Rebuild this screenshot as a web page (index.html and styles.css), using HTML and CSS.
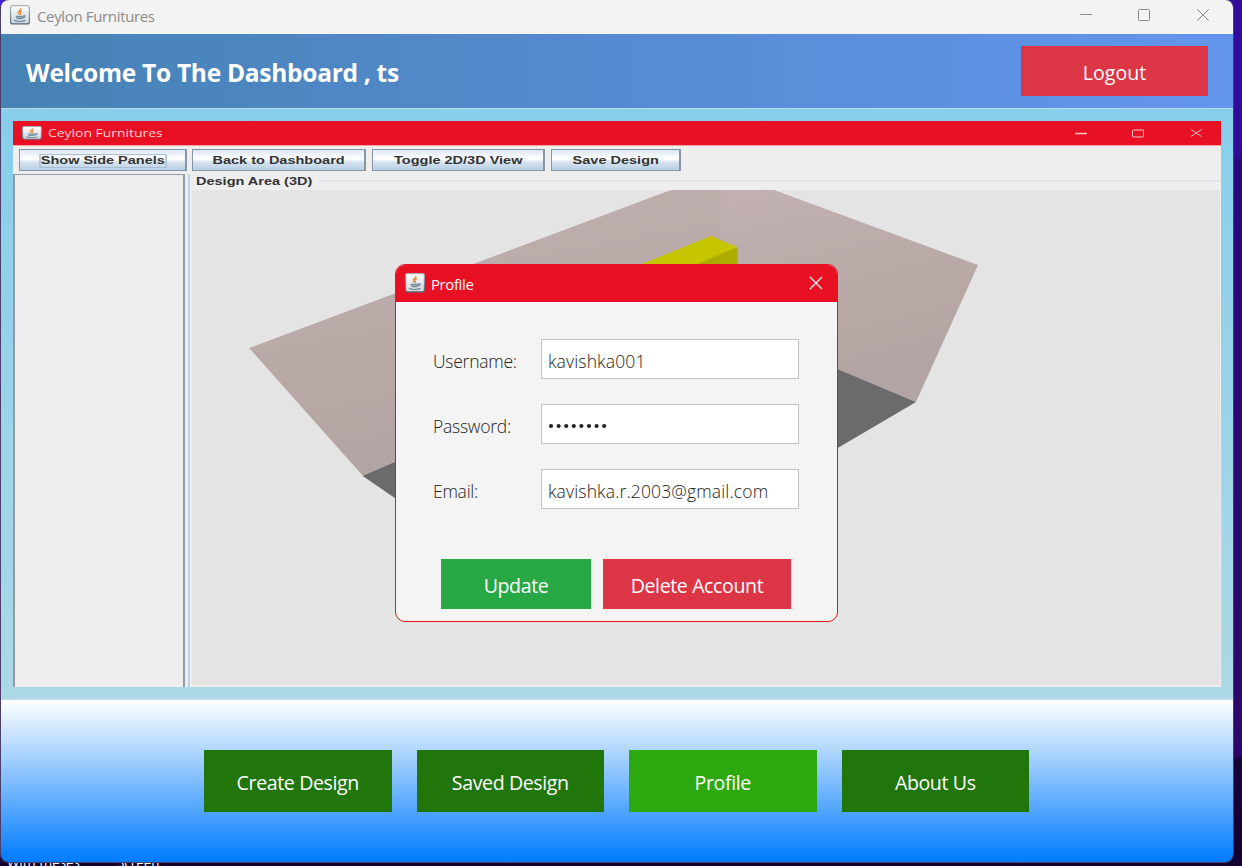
FILE: index.html
```html
<!DOCTYPE html>
<html lang="en">
<head>
<meta charset="utf-8">
<title>Ceylon Furnitures</title>
<link rel="stylesheet" href="styles.css">
</head>
<body>
<svg class="defs" width="0" height="0">
  <defs>
    <linearGradient id="tile" x1="0" y1="0" x2="0" y2="1"><stop offset="0" stop-color="#fff"/><stop offset="1" stop-color="#ccd2d6"/></linearGradient>
    <linearGradient id="edge" x1="0" y1="0" x2="0" y2="1"><stop offset="0" stop-color="#a9b1b6"/><stop offset="1" stop-color="#4e697c"/></linearGradient>
    <symbol id="java" viewBox="0 0 20 20" preserveAspectRatio="none">
      <rect x=".6" y=".6" width="18.8" height="18.3" rx="2" fill="url(#tile)" stroke="url(#edge)" stroke-width="1.1"/>
      <path d="M10.700 3.200c1 1.600-3.400 2.800-2.500 4.700.3.700 1 1.200 1.500 1.700M12 5.600c-1.600.7-2.700 1.400-1.700 2.600.5.600.2 1.200-.3 1.600" fill="none" stroke="#e58a3c" stroke-width="1.300"/>
      <path d="M5.600 10.700h8v1.100c-.3 1.300-.9 2-1.700 2.400H7.500c-1-.5-1.700-1.700-1.900-3.500z" fill="#6d8b9e"/>
      <path d="M6.500 12.400h6" stroke="#b9c6ce" stroke-width=".7"/>
      <path d="M13.400 10.800c2.300-.6 2.400 1.400-.3 2.100M4 15.300c2.600 1.600 8.800 1.500 11.400.1" fill="none" stroke="#6d8b9e" stroke-width="1.200"/>
    </symbol>
  </defs>
</svg>
<div class="desktop">
  <div class="desk-text"><span>With theses</span><span>Screen</span></div>
  <div class="window">
    <div class="titlebar">
      <svg class="java" width="20" height="20"><use href="#java"/></svg>
      <span class="title">Ceylon Furnitures</span>
      <svg class="controls" width="132" height="14" fill="none" stroke="#8b8b8b"><path d="M0 7.500h12"/><rect x="58.500" y="2.500" width="11" height="11" rx="1"/><path d="M117.200 2.200l11.600 11.600M128.800 2.200l-11.600 11.600"/></svg>
    </div>
    <div class="header">
      <h1 class="welcome">Welcome To The Dashboard , ts</h1>
      <button class="btn logout">Logout</button>
    </div>
    <div class="main">
      <div class="inner">
        <div class="inner-title">
          <svg class="inner-java" width="20" height="14"><use href="#java" width="20" height="14"/></svg>
          <span class="inner-name">Ceylon Furnitures</span>
          <svg class="inner-controls" width="128" height="10" fill="none" stroke="#ffc4ca"><path d="M0 5.500h12" stroke-width="1.500"/><rect x="57.500" y="2" width="11" height="7" rx="1"/><path d="M116 1.500l10.500 7M126.500 1.500l-10.500 7"/></svg>
        </div>
        <div class="toolbar">
          <div class="tool t1"><span class="wide focus">Show Side Panels</span></div>
          <div class="tool t2"><span class="wide">Back to Dashboard</span></div>
          <div class="tool t3"><span class="wide">Toggle 2D/3D View</span></div>
          <div class="tool t4"><span class="wide">Save Design</span></div>
        </div>
        <div class="work">
          <div class="side"></div>
          <div class="design">
            <div class="legend"><span class="wide legend-text">Design Area (3D)</span></div>
            <svg class="scene" width="1028" height="495" viewBox="192 190 1028 495">
              <defs><linearGradient id="wall" x1="0" y1="0" x2=".3" y2="1"><stop offset="0" stop-color="#c1b0af"/><stop offset="1" stop-color="#b2a4a2"/></linearGradient></defs>
              <path d="M249 348L671 190H722V370L363 476Z" fill="url(#wall)"/>
              <path d="M721 190H774L978 265L916 402L721 320V190Z" fill="url(#wall)"/>
              <path d="M363 476L721 320L916 402L560 611Z" fill="#6b6b6b"/>
              <path d="M363 476L500 417V570Z" fill="#6b6b6b"/>
              <path d="M600 281L711 236L737 247L680 275Z" fill="#c5c600"/>
              <path d="M690 267L737.500 247V270H690Z" fill="#acac00"/>
            </svg>
          </div>
        </div>
      </div>
    </div>
    <div class="footer">
      <button class="btn nav">Create Design</button>
      <button class="btn nav">Saved Design</button>
      <button class="btn nav active">Profile</button>
      <button class="btn nav">About Us</button>
    </div>
  </div>
  <div class="dialog">
    <div class="dialog-title">
      <svg width="20" height="20"><use href="#java"/></svg>
      <span class="dialog-name">Profile</span>
      <svg class="close" width="14" height="14" fill="none" stroke="#fff" stroke-width="1.200"><path d="M1 1l12 12M13 1L1 13"/></svg>
    </div>
    <div class="form">
      <span class="label">Username:</span><div class="field"><span class="value">kavishka001</span></div>
      <span class="label">Password:</span><div class="field"><svg width="60" height="6" fill="#222"><circle cx="3" cy="3" r="2.100"/><circle cx="10.600" cy="3" r="2.100"/><circle cx="18.200" cy="3" r="2.100"/><circle cx="25.800" cy="3" r="2.100"/><circle cx="33.400" cy="3" r="2.100"/><circle cx="41" cy="3" r="2.100"/><circle cx="48.600" cy="3" r="2.100"/><circle cx="56.200" cy="3" r="2.100"/></svg></div>
      <span class="label">Email:</span><div class="field"><span class="value">kavishka.r.2003@gmail.com</span></div>
    </div>
    <div class="actions">
      <button class="btn update">Update</button>
      <button class="btn delete">Delete Account</button>
    </div>
  </div>
</div>
</body>
</html>
```
FILE: styles.css
```css
* { box-sizing: border-box; }
body { margin: 0; font-family: "Open Sans", "Noto Sans", sans-serif; }
.defs { position: absolute; }
.desktop {
  position: relative; width: 1242px; height: 866px; overflow: hidden; padding-left: 1px;
  background: linear-gradient(#320b9c 0, #310b98 155px, #2a087c 160px, #2d0768 755px, #170238 760px, #13002e 866px);
}
.desktop::before { content: ""; position: absolute; left: 0; top: 0; width: 8px; height: 862px; background: linear-gradient(#4422dc, #5537b5 140px, #863365 220px, #59315f 600px, #1c0a3c); }
.desk-text { position: absolute; left: 7px; top: 853px; display: flex; gap: 37px; color: #fff; font-size: 13.400px; line-height: 18px; }
.window { position: relative; width: 1232px; height: 862px; border-radius: 8px; overflow: hidden; display: flex; flex-direction: column; box-shadow: 0 0 0 1px #493f68; }
.titlebar { height: 34px; flex: none; background: #f3f3f3; display: flex; align-items: flex-start; padding: 5px 24px 0 9px; }
.title { margin-left: 7px; color: #8b8b8b; font-size: 15px; line-height: 22px; letter-spacing: -.35px; }
.controls { margin: 2px 0 0 auto; overflow: visible; width: 129px; }
.header { height: 75px; flex: none; border-bottom: 1px solid #b9dcea; background: linear-gradient(90deg, #4682b4, #6495ed); display: flex; align-items: center; justify-content: space-between; padding: 0 25px 0 25px; }
.welcome { margin: 4px 0 0; font-size: 24.500px; line-height: 34px; letter-spacing: -.28px; color: #fff; font-weight: 700; white-space: nowrap; }
.btn { border: 0; padding: 4px 0 0; margin: 0; font: 500 19.600px/28px "Open Sans", "Noto Sans", sans-serif; letter-spacing: -.4px; color: #fff; white-space: nowrap; text-align: center; }
.logout { width: 187px; height: 50px; background: #dc3545; letter-spacing: 0; }
.main { height: 591px; flex: none; padding: 12px; background: linear-gradient(#87ceeb, #add8e6); border-bottom: 1px solid #c5e0ec; }
.inner { width: 1208px; height: 566px; background: #eee; display: flex; flex-direction: column; font-family: "Liberation Sans", Arial, sans-serif; }
.inner-title { height: 25px; flex: none; background: #e81123; border-bottom: 1px solid #f3a0a6; display: flex; align-items: center; padding: 0 18px 0 9px; }
.inner-name { margin-left: 6px; font: 10.500px/18px "Open Sans", sans-serif; color: #ffd3d7; white-space: nowrap; transform-origin: 0 50%; transform: scaleX(1.325); }
.inner-controls { margin-left: auto; }
.toolbar { height: 28px; flex: none; display: flex; gap: 6px; padding: 3px 6px; }
.tool { height: 22px; border: 1px solid #8796a5; border-width: 1px 2px 1px 1px; background: linear-gradient(#dce7f1, #fff 45%, #d7e4ef 60%, #b8cfe5); display: flex; align-items: center; justify-content: center; padding-top: 1px; }
.t1 { width: 168px; margin-right: -1px; } .t2 { width: 174px; } .t3 { width: 173px; } .t4 { width: 130px; }
.wide { font-size: 10px; line-height: 12px; font-weight: 700; color: #333; white-space: nowrap; transform: scaleX(1.450); }
.focus { outline: 1px solid #a9bdd3; }
.work { flex: 1; display: flex; min-height: 0; }
.side { width: 172px; border: solid #8f9ba8; border-width: 1px 2px 0 2px; }
.design { flex: 1; margin-left: 3px; border-left: 2px solid #bdd3e8; display: flex; flex-direction: column; padding-left: 2px; }
.legend { height: 16px; flex: none; display: flex; align-items: center; padding-left: 4px; }
.legend::after { content: ""; height: 2px; flex: 1; background: #dfe5eb; margin: 0 0 2px 42px; }
.legend-text { transform-origin: 0 50%; }
.scene { background: #e4e4e4; display: block; flex: none; }
.footer { flex: 1; background: linear-gradient(#fff, #007bff); display: flex; justify-content: center; gap: 25px; padding: 50px 1px 0 0; }
.nav { width: 187.500px; height: 62px; background: #20750b; }
.active { background: #2da90f; }
.dialog { position: absolute; left: 395px; top: 264px; width: 443px; height: 358px; border: 1px solid #e81123; border-radius: 10px; background: #f4f4f4; overflow: hidden; }
.dialog-title { height: 37px; background: #e81123; display: flex; align-items: center; padding: 0 14px 2px 9px; color: #fff; }
.dialog-name { margin: 2px 0 0 6px; font-size: 15px; line-height: 22px; letter-spacing: -.4px; }
.close { margin-left: auto; }
.form { padding: 37px 0 0 37px; display: grid; grid-template-columns: 108px 258px; grid-auto-rows: 40px; row-gap: 25px; }
.label, .value { font-size: 17.500px; font-weight: 300; color: #222; white-space: nowrap; line-height: 40px; }
.label { padding-top: 2px; letter-spacing: -.25px; }
.value { letter-spacing: .15px; }
.field { height: 40px; border: 1px solid #c3c3c3; background: #fff; display: flex; align-items: center; padding: 4px 0 0 6px; }
.actions { display: flex; gap: 12px; padding: 50px 0 0 45px; }
.update { width: 150px; height: 50px; background: #28a745; }
.delete { width: 188px; height: 50px; background: #dc3545; }
```
